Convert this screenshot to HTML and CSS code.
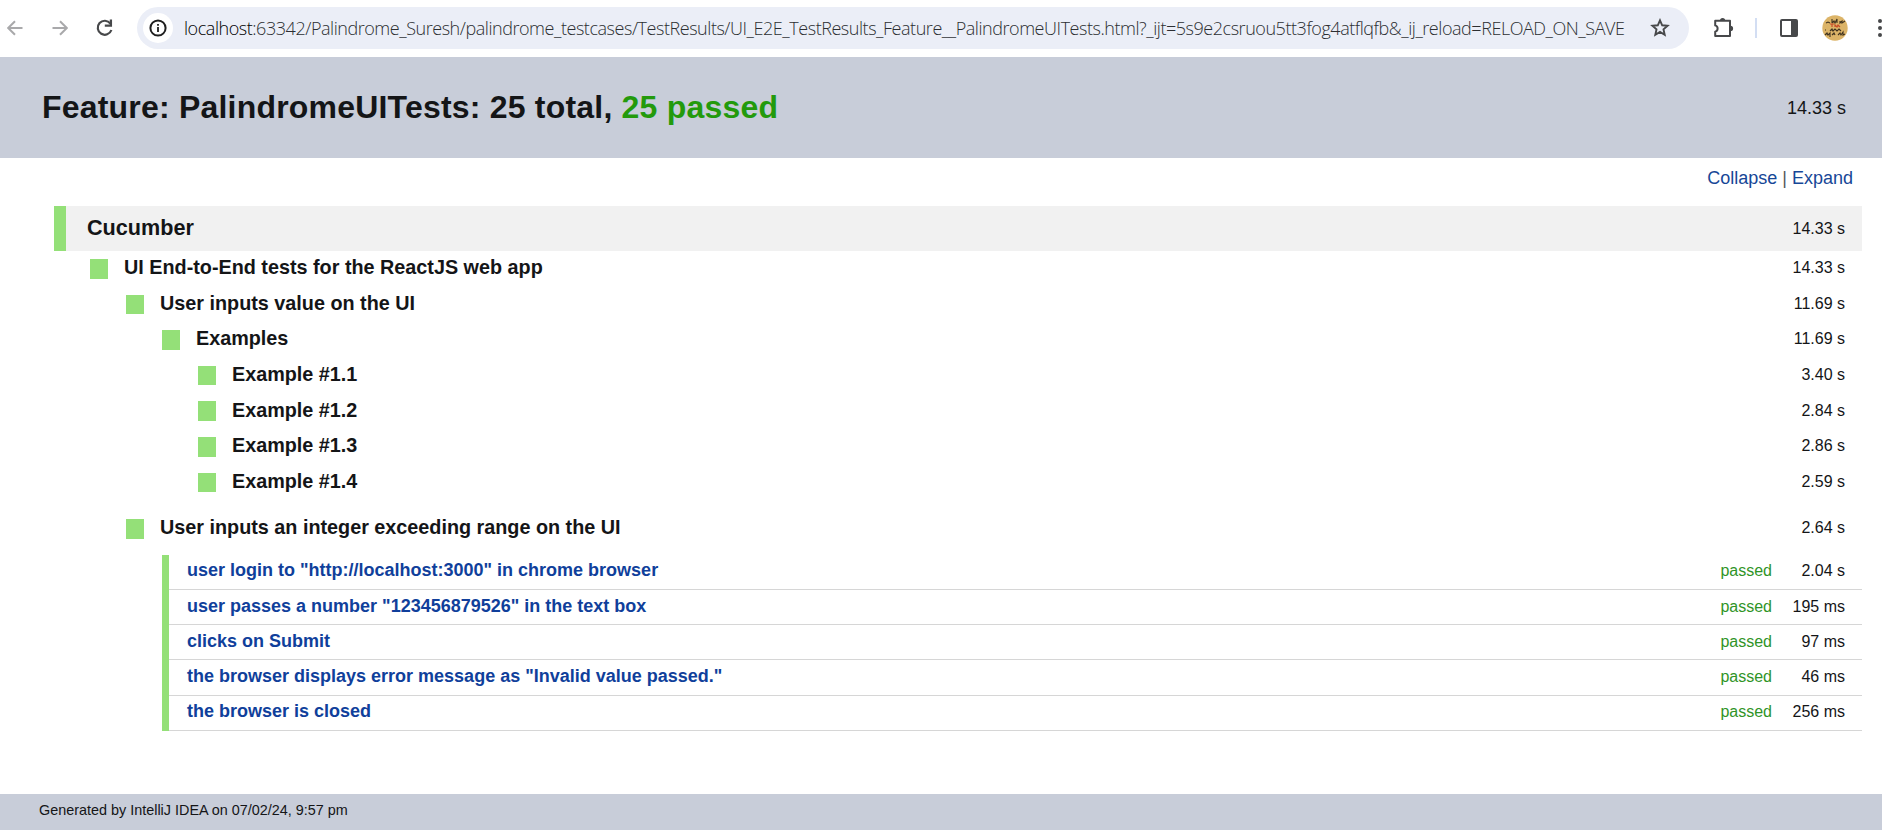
FILE: index.html
```html
<!DOCTYPE html>
<html lang="en">
<head>
<meta charset="utf-8">
<title>Test Results — Feature: PalindromeUITests</title>
<link rel="stylesheet" href="styles.css">
</head>
<body>
<nav class="toolbar">
  <svg class="ico back" width="16" height="16" viewBox="0 0 16 16"><path d="M15.5 8H1.5M8 1.2L1.2 8L8 14.8" fill="none" stroke="#a9a9ab" stroke-width="2"/></svg>
  <svg class="ico fwd" width="16" height="16" viewBox="0 0 16 16"><path d="M.5 8h14M8 1.2L14.8 8L8 14.8" fill="none" stroke="#a9a9ab" stroke-width="2"/></svg>
  <svg class="ico reload" width="18" height="18" viewBox="0 0 18 18"><path d="M14.4 4.6A7 7 0 1 0 15.4 11" fill="none" stroke="#47484a" stroke-width="2.2"/><path d="M14.9.6v6.1H8.8" fill="none" stroke="#47484a" stroke-width="2.3"/></svg>
  <div class="address">
    <span class="info"><svg width="18" height="18" viewBox="0 0 18 18"><circle cx="9" cy="9" r="7.6" fill="none" stroke="#1f1f1f" stroke-width="2"/><path d="M9 8v5M9 5v1.8" stroke="#1f1f1f" stroke-width="1.8"/></svg></span>
    <span class="url"><span class="host">localhost</span>:63342/Palindrome_Suresh/palindrome_testcases/TestResults/UI_E2E_TestResults_Feature__PalindromeUITests.html?_ijt=5s9e2csruou5tt3fog4atflqfb&amp;_ij_reload=RELOAD_ON_SAVE</span>
    <svg class="star" width="20" height="20" viewBox="0 0 20 20"><path d="M10 2.3l2.2 5 5.4.5-4.1 3.6 1.2 5.3L10 13.9l-4.7 2.8 1.2-5.3-4.1-3.6 5.4-.5z" fill="none" stroke="#47484a" stroke-width="1.9"/></svg>
  </div>
  <svg class="ico puzzle" width="22" height="22" viewBox="0 0 22 22"><path d="M2.2 3.8H17V19H2.2V14.6A3.2 3.2 0 0 0 2.2 8.4Z" fill="none" stroke="#47484a" stroke-width="2" stroke-linejoin="round"/><path d="M7 3.5a2.6 2.6 0 0 1 5.2 0zM17.5 8.8a2.6 2.6 0 0 1 0 5.2z" fill="#47484a"/></svg>
  <span class="divider"></span>
  <svg class="ico panel" width="18" height="18" viewBox="0 0 18 18"><rect x="1" y="1" width="16" height="16" rx="1" fill="none" stroke="#47484a" stroke-width="2"/><path d="M11 1h6v16h-6z" fill="#47484a"/></svg>
  <svg class="ico avatar" width="26" height="26" viewBox="0 0 26 26"><circle cx="13" cy="13" r="12.7" fill="#dcb468"/><g fill="none" stroke="#40331f" stroke-width="1.1"><path d="M4 8l2-1 2 1M10 8V4M10 8l2-2 1 2 2-4v4M18 6v2l2-2v2l3-2"/><path d="M3 15h1M8 16l2-2 1 2 2-2 2 2 2-2 2 2"/><path d="M3 20l2-2 1 2 2-2v4M10 20l2-2 1 2M16 20l2-2 1 2 2-3v3l2-1"/></g><path d="M8 9h4M10 9v3M13 12v-2l2 2 1-2 2 2" fill="none" stroke="#c84b26" stroke-width="1.2"/></svg>
  <svg class="ico dots" width="4" height="20" viewBox="0 0 4 20"><g fill="#47484a"><circle cx="2" cy="3" r="2"/><circle cx="2" cy="10" r="2"/><circle cx="2" cy="17" r="2"/></g></svg>
</nav>
<header class="header">
  <h1 class="title">Feature: PalindromeUITests: 25 total, <span class="ok">25 passed</span></h1>
  <span class="total">14.33 s</span>
</header>
<main class="content">
  <div class="controls"><a>Collapse</a> | <a>Expand</a></div>
  <div class="suite"><span class="name">Cucumber</span><span class="time">14.33 s</span></div>
  <div class="tree">
    <div class="node l1"><i class="mark"></i><span class="name">UI End-to-End tests for the ReactJS web app</span><span class="time">14.33 s</span></div>
    <div class="node l2"><i class="mark"></i><span class="name">User inputs value on the UI</span><span class="time">11.69 s</span></div>
    <div class="node l3"><i class="mark"></i><span class="name">Examples</span><span class="time">11.69 s</span></div>
    <div class="node l4"><i class="mark"></i><span class="name">Example #1.1</span><span class="time">3.40 s</span></div>
    <div class="node l4"><i class="mark"></i><span class="name">Example #1.2</span><span class="time">2.84 s</span></div>
    <div class="node l4"><i class="mark"></i><span class="name">Example #1.3</span><span class="time">2.86 s</span></div>
    <div class="node l4"><i class="mark"></i><span class="name">Example #1.4</span><span class="time">2.59 s</span></div>
    <div class="node l2 gap"><i class="mark"></i><span class="name">User inputs an integer exceeding range on the UI</span><span class="time">2.64 s</span></div>
  </div>
  <div class="steps">
    <div class="step"><span class="name">user login to "http://localhost:3000" in chrome browser</span><span class="status">passed</span><span class="time">2.04 s</span></div>
    <div class="step"><span class="name">user passes a number "123456879526" in the text box</span><span class="status">passed</span><span class="time">195 ms</span></div>
    <div class="step"><span class="name">clicks on Submit</span><span class="status">passed</span><span class="time">97 ms</span></div>
    <div class="step"><span class="name">the browser displays error message as "Invalid value passed."</span><span class="status">passed</span><span class="time">46 ms</span></div>
    <div class="step"><span class="name">the browser is closed</span><span class="status">passed</span><span class="time">256 ms</span></div>
  </div>
</main>
<footer class="footer">Generated by IntelliJ IDEA on 07/02/24, 9:57 pm</footer>
</body>
</html>
```
FILE: styles.css
```css
* { box-sizing: border-box; }
body { margin: 0; height: 837px; overflow: hidden; background: #fff; color: #141517; font-family: "Liberation Sans", Arial, sans-serif; display: flex; flex-direction: column; }
.toolbar { height: 57px; flex: none; display: flex; align-items: center; padding: 0 0 1px 7px; overflow: hidden; }
.ico { flex: none; display: block; }
.fwd { margin-left: 29px; }
.reload { margin-left: 28px; }
.address { margin-left: 23px; width: 1552px; height: 42px; flex: none; border-radius: 21px; background: #ebeef7; display: flex; align-items: center; padding-left: 6px; }
.info { width: 30px; height: 30px; border-radius: 50%; background: #fff; display: flex; align-items: center; justify-content: center; flex: none; }
.url { margin-left: 11px; width: 1466px; flex: none; white-space: nowrap; font: 300 18px/42px "Open Sans", "Noto Sans", sans-serif; letter-spacing: -0.455px; color: #2c2e32; }
.host { color: #000; }
.star { flex: none; }
.puzzle { margin-left: 23.5px; }
.divider { margin-left: 20.5px; width: 2px; height: 20px; background: #d3def3; flex: none; }
.panel { margin-left: 23px; }
.avatar { margin-left: 24px; }
.dots { margin-left: 30px; }
.header { height: 101px; flex: none; background: #c8cdd9; display: flex; align-items: center; justify-content: space-between; padding: 0 36px 0 42px; }
.title { margin: 0; padding-bottom: 2px; font-size: 32px; line-height: 36px; letter-spacing: 0.2px; white-space: nowrap; }
.ok { color: #239a0c; }
.total { padding-top: 2px; font-size: 18px; }
.content { height: 636px; flex: none; padding: 0 20px 0 54px; }
.controls { height: 48px; padding: 10px 9px 0 0; text-align: right; font-size: 18px; line-height: 20px; color: #55575c; }
.controls a { color: #174797; }
.suite { height: 45px; background: #f1f1f1; border-left: 12px solid #94e078; padding: 0 17px 0 21px; display: flex; align-items: center; font-size: 21.6px; }
.name { font-weight: bold; flex: 1; padding-bottom: 2px; white-space: nowrap; }
.time { font-size: 16px; text-align: right; white-space: nowrap; }
.node { height: 35.6px; padding-right: 17px; display: flex; align-items: center; font-size: 19.8px; }
.node .time { padding-bottom: 1px; }
.mark { width: 18px; height: 19.5px; margin-right: 16px; background: #94e078; flex: none; }
.l1 { padding-left: 36px; }
.l2 { padding-left: 72px; }
.l3 { padding-left: 108px; }
.l4 { padding-left: 144px; }
.gap { margin-top: 11px; }
.steps { margin: 8px 0 0 108px; border-left: 7px solid #94e078; }
.step { height: 35.2px; border-bottom: 1px solid #d6d6d6; padding: 0 17px 1px 18px; display: flex; align-items: center; font-size: 18px; color: #103f9b; }
.step .name { padding-bottom: 1px; }
.status { color: #2f9427; font-size: 16px; }
.step .time { width: 73px; color: #141517; }
.footer { height: 36px; flex: none; background: #c8cdd9; padding-left: 39px; font-size: 14.4px; line-height: 32px; }
```
